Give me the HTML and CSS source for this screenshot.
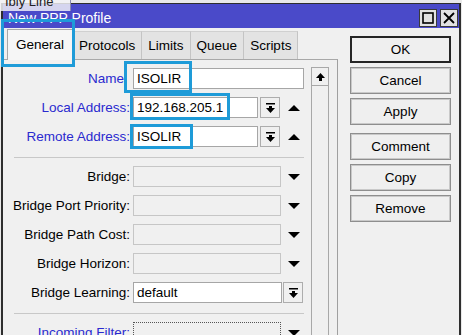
FILE: index.html
```html
<!DOCTYPE html>
<html lang="en">
<head>
  <meta charset="UTF-8">
  <meta name="viewport" content="width=device-width, initial-scale=1.0">
  <title>New PPP Profile</title>
  <link rel="stylesheet" href="styles.css">
</head>
<body>
  <div class="window">
    <div class="titlebar">
      <span class="title">New PPP Profile</span>
      <div class="title-buttons">
        <span class="tb-btn">
          <svg width="12" height="12" viewBox="0 0 12 12"><rect x="1" y="1" width="10" height="10" fill="none" stroke="#000" stroke-width="1.6"/></svg>
        </span>
        <span class="tb-btn">
          <svg width="12" height="12" viewBox="0 0 12 12"><path d="M1 1 L11 11 M11 1 L1 11" stroke="#000" stroke-width="1.8"/></svg>
        </span>
      </div>
    </div>

    <div class="body">
      <div class="content">
        <div class="tabs">
          <div class="tab active">General</div>
          <div class="tab">Protocols</div>
          <div class="tab">Limits</div>
          <div class="tab">Queue</div>
          <div class="tab">Scripts</div>
        </div>

        <div class="panel">
          <div class="form">
            <div class="row">
              <span class="label blue name-label">Name</span>
              <div class="field w-name">ISOLIR</div>
            </div>
            <div class="row">
              <span class="label blue">Local Address:</span>
              <div class="field w-addr">192.168.205.1</div>
              <span class="pick"><svg width="9" height="10" viewBox="0 0 9 10"><rect x="0" y="0" width="9" height="1.5"/><rect x="3" y="3" width="3" height="2.5"/><polygon points="0,5 9,5 4.5,10"/></svg></span>
              <span class="tri"><svg width="12" height="6" viewBox="0 0 12 6"><polygon points="0,6 6,0 12,6"/></svg></span>
            </div>
            <div class="row">
              <span class="label blue">Remote Address:</span>
              <div class="field w-addr">ISOLIR</div>
              <span class="pick"><svg width="9" height="10" viewBox="0 0 9 10"><rect x="0" y="0" width="9" height="1.5"/><rect x="3" y="3" width="3" height="2.5"/><polygon points="0,5 9,5 4.5,10"/></svg></span>
              <span class="tri"><svg width="12" height="6" viewBox="0 0 12 6"><polygon points="0,6 6,0 12,6"/></svg></span>
            </div>

            <div class="sep"></div>

            <div class="row">
              <span class="label">Bridge:</span>
              <div class="field off w-bridge"></div>
              <span class="tri down"><svg width="12" height="6" viewBox="0 0 12 6"><polygon points="0,0 12,0 6,6"/></svg></span>
            </div>
            <div class="row">
              <span class="label">Bridge Port Priority:</span>
              <div class="field off w-bridge"></div>
              <span class="tri down"><svg width="12" height="6" viewBox="0 0 12 6"><polygon points="0,0 12,0 6,6"/></svg></span>
            </div>
            <div class="row">
              <span class="label">Bridge Path Cost:</span>
              <div class="field off w-bridge"></div>
              <span class="tri down"><svg width="12" height="6" viewBox="0 0 12 6"><polygon points="0,0 12,0 6,6"/></svg></span>
            </div>
            <div class="row">
              <span class="label">Bridge Horizon:</span>
              <div class="field off w-bridge"></div>
              <span class="tri down"><svg width="12" height="6" viewBox="0 0 12 6"><polygon points="0,0 12,0 6,6"/></svg></span>
            </div>
            <div class="row">
              <span class="label">Bridge Learning:</span>
              <div class="field w-learn">default</div>
              <span class="pick tight"><svg width="9" height="10" viewBox="0 0 9 10"><rect x="0" y="0" width="9" height="1.5"/><rect x="3" y="3" width="3" height="2.5"/><polygon points="0,5 9,5 4.5,10"/></svg></span>
            </div>

            <div class="sep"></div>

            <div class="row">
              <span class="label blue">Incoming Filter:</span>
              <div class="field off focus w-bridge"></div>
              <span class="tri down"><svg width="12" height="6" viewBox="0 0 12 6"><polygon points="0,0 12,0 6,6"/></svg></span>
            </div>
          </div>

          <div class="scrollbar">
            <div class="scroll-up">
              <svg width="9" height="8" viewBox="0 0 9 8"><polygon points="0,5 4.5,0 9,5"/><rect x="3" y="5" width="3" height="3"/></svg>
            </div>
          </div>
        </div>
      </div>

      <div class="actions">
        <button class="btn default">OK</button>
        <button class="btn">Cancel</button>
        <button class="btn gap">Apply</button>
        <button class="btn">Comment</button>
        <button class="btn">Copy</button>
        <button class="btn">Remove</button>
      </div>
    </div>
  </div>

  <!-- bit of the window behind, and the highlight marks drawn over the shot -->
  <div class="behind"><span>Ibiy Line</span></div>
  <div class="mark mark-general"></div>
  <div class="mark mark-name"></div>
  <div class="mark mark-local"></div>
  <div class="mark mark-remote"></div>
</body>
</html>
```

FILE: styles.css
```css
* {
  padding: 0;
  margin: 0;
  box-sizing: border-box;
}

body {
  width: 462px;
  height: 335px;
  overflow: hidden;
  position: relative;
  background: #e9e9e9;
  font-family: 'Liberation Sans', Arial, sans-serif;
  font-size: 13.5px;
  color: #000;
}

.window {
  margin: 3px 0 0 1px;
  width: 460px;
  height: 340px;
  border: 2px solid #2e2e2e;
  border-top-width: 1px;
  background: #f0f0f0;
}

.titlebar {
  height: 24px;
  display: flex;
  align-items: center;
  padding-left: 5px;
  background: #4a4ac9;
}

.title {
  color: #fff;
  font-size: 14px;
  padding-top: 3px;
}

.title-buttons {
  margin-left: auto;
  display: flex;
  gap: 3px;
  padding-right: 1px;
  padding-top: 3px;
}

.tb-btn {
  width: 18px;
  height: 18px;
  display: flex;
  align-items: center;
  justify-content: center;
  background: #e2e2e2;
  border: 1px solid #3a3a3a;
}

.body {
  display: flex;
}

.content {
  width: 335px;
}

.tabs {
  height: 31px;
  display: flex;
  align-items: flex-end;
  padding-left: 4px;
}

.tab {
  height: 28px;
  line-height: 27px;
  padding: 0 6px;
  background: #e3e3e3;
  border-top: 1px solid #d0d0d0;
  border-right: 1px solid #c4c4c4;
}

.tab.active {
  height: 31px;
  margin-bottom: -1px;
  padding: 0 8px 2px;
  line-height: 29px;
  background: #f6f6f6;
  border: 1px solid #a8a8a8;
  border-bottom: none;
  position: relative;
}

.panel {
  display: flex;
  height: 290px;
  border-top: 1px solid #a8a8a8;
  border-right: 1px solid #a0a0a0;
}

.form {
  width: 308px;
  padding-top: 8px;
  display: flex;
  flex-direction: column;
}

.row {
  display: flex;
  align-items: center;
  flex: none;
  height: 21px;
  margin-bottom: 8px;
}

.label {
  width: 127px;
  text-align: right;
  white-space: nowrap;
}

.label.blue {
  color: #2a2acf;
}

.name-label {
  padding-right: 6px;
}

.field {
  margin-left: 3px;
  height: 21px;
  line-height: 19px;
  padding-left: 3px;
  background: #fff;
  border: 1px solid #a6a6a6;
}

.field.off {
  background: #f0f0f0;
  border-color: #c6c6c6;
}

.field.focus {
  border: 1px dotted #555;
}

.w-name { width: 171px; }
.w-addr { width: 125px; }
.w-bridge { width: 148px; }
.w-learn { width: 149px; }

.pick {
  width: 20px;
  height: 21px;
  margin-left: 2px;
  display: flex;
  align-items: center;
  justify-content: center;
  background: #f0f0f0;
  border: 1px solid #adadad;
}

.pick.tight {
  margin-left: 1px;
}

.tri {
  display: flex;
  margin-left: 8px;
}

.tri.down {
  margin-left: 7px;
}

.sep {
  flex: none;
  height: 1px;
  width: 290px;
  margin: 2px 0 8px 11px;
  background: #c8c8c8;
}

.scrollbar {
  width: 18px;
  margin: 7px 7px 0 0;
  border-left: 1px solid #a8a8a8;
  border-right: 1px solid #a8a8a8;
}

.scroll-up {
  height: 19px;
  display: flex;
  align-items: center;
  justify-content: center;
  border-top: 1px solid #a8a8a8;
  border-bottom: 1px solid #a8a8a8;
}

.actions {
  width: 101px;
  margin-left: 12px;
  padding-top: 8px;
  display: flex;
  flex-direction: column;
  gap: 4px;
}

.btn {
  height: 27px;
  font-family: inherit;
  font-size: 13.5px;
  color: #000;
  background: #efefef;
  border: 1px solid #8e8e8e;
  box-shadow: inset 0 0 0 1px #c9c9c9;
}

.btn.default {
  border: 2px solid #252525;
  box-shadow: none;
}

.btn.gap {
  margin-bottom: 4px;
}

.behind {
  position: absolute;
  left: 0;
  top: 0;
  width: 71px;
  height: 11px;
  overflow: hidden;
  padding-left: 5px;
  background: rgba(244, 244, 248, 0.82);
  border-right: 1px solid #8a8ab0;
  font-size: 13px;
  line-height: 10px;
  color: #222;
}

.behind span {
  display: block;
  margin-top: -3px;
}

.mark {
  position: absolute;
  border: 3px solid #1e9bd8;
}

.mark-general { left: 1px; top: 19px; width: 74px; height: 48px; }
.mark-name { left: 124px; top: 61px; width: 68px; height: 32px; }
.mark-local { left: 130px; top: 93px; width: 100px; height: 27px; }
.mark-remote { left: 130px; top: 124px; width: 63px; height: 25px; }
```
